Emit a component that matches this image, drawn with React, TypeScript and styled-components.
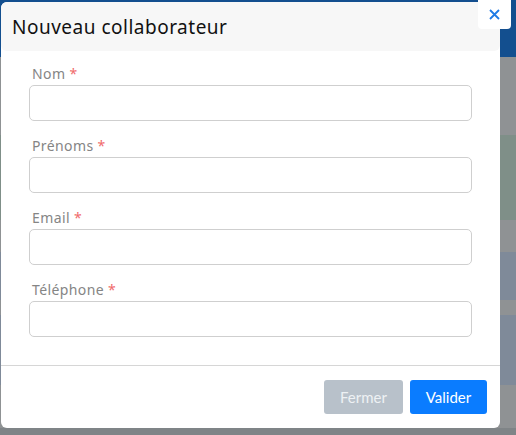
import styled, { createGlobalStyle } from "styled-components";

const GlobalStyle = createGlobalStyle`
  html, body {
    margin: 0;
    padding: 0;
  }
  body {
    font-family: "Noto Sans", "Liberation Sans", sans-serif;
    background: #7f8487;
  }
`;

const Page = styled.div`
  position: relative;
  width: 516px;
  height: 435px;
  overflow: hidden;
  display: flex;
  flex-direction: column;
`;

const Band = styled.div<{ $h: number; $c: string }>`
  height: ${p => p.$h}px;
  flex-shrink: 0;
  background: ${p => p.$c};
`;

const Modal = styled.div`
  position: absolute;
  left: 1px;
  top: 2px;
  width: 499px;
  height: 426px;
  background: #fff;
  border-radius: 6px;
  display: flex;
  flex-direction: column;
`;

const Header = styled.div`
  height: 49px;
  background: #f7f7f7;
  border-radius: 6px;
  display: flex;
  align-items: center;
  padding: 0 11px;
  flex-shrink: 0;
`;

const Title = styled.h5`
  margin: 0;
  font-family: "Noto Sans", sans-serif;
  font-weight: 400;
  font-size: 19px;
  color: #111;
  letter-spacing: 0.5px;
`;

const CloseButton = styled.button`
  position: absolute;
  top: 0;
  left: 478px;
  width: 33px;
  height: 29px;
  border: none;
  background: #fff;
  border-radius: 0 0 4px 4px;
  display: flex;
  align-items: center;
  justify-content: center;
  padding: 0;
  cursor: pointer;
`;

const Body = styled.div`
  flex: 1;
  padding: 11px 27px 0 28px;
  display: flex;
  flex-direction: column;
  gap: 13px;
`;

const Field = styled.div`
  display: flex;
  flex-direction: column;
`;

const Label = styled.label`
  font-family: "Noto Sans", sans-serif;
  font-size: 14px;
  color: #858585;
  line-height: 20px;
  padding: 2px 0 0 3px;
  margin-bottom: 1px;
  letter-spacing: 0.4px;
`;

const Star = styled.span`
  color: #f06b6b;
  margin-left: 4px;
`;

const Input = styled.input`
  box-sizing: border-box;
  height: 36px;
  width: 443px;
  border: 1px solid #cfcfcf;
  border-radius: 5px;
  background: #fff;
  outline: none;
`;

const Footer = styled.div`
  box-sizing: border-box;
  height: 63px;
  border-top: 1px solid #d6d6d6;
  display: flex;
  justify-content: flex-end;
  align-items: flex-start;
  gap: 7px;
  padding: 14px 13px 0 0;
  flex-shrink: 0;
`;

const Button = styled.button<{ $primary?: boolean }>`
  height: 34px;
  padding: 0 14px;
  border: none;
  border-radius: 3px;
  font-family: "Lato", "Noto Sans", sans-serif;
  font-size: 15px;
  color: ${p => (p.$primary ? "#fff" : "#eef1f4")};
  background: ${p => (p.$primary ? "#0a7cff" : "#b8c1ca")};
  width: ${p => (p.$primary ? 77 : 79)}px;
`;

const fields = ["Nom", "Prénoms", "Email", "Téléphone"];

export default function App() {
  return (
    <Page>
      <GlobalStyle />
      <Band $h={57} $c="#134f8f" />
      <Band $h={78} $c="#8f9294" />
      <Band $h={85} $c="#7f8f88" />
      <Band $h={32} $c="#8f9294" />
      <Band $h={48} $c="#7f8a99" />
      <Band $h={15} $c="#8f9294" />
      <Band $h={70} $c="#7f8a99" />
      <Band $h={43} $c="#8f9294" />
      <Band $h={7} $c="#7f8487" />
      <Modal>
        <Header>
          <Title>Nouveau collaborateur</Title>
        </Header>
        <Body>
          {fields.map(f => (
            <Field key={f}>
              <Label>
                {f}
                <Star>*</Star>
              </Label>
              <Input />
            </Field>
          ))}
        </Body>
        <Footer>
          <Button>Fermer</Button>
          <Button $primary>Valider</Button>
        </Footer>
      </Modal>
      <CloseButton>
        <svg width="11" height="11" viewBox="0 0 11 11">
          <path d="M1 1 L10 10 M10 1 L1 10" stroke="#1e7be6" strokeWidth="1.8" />
        </svg>
      </CloseButton>
    </Page>
  );
}
